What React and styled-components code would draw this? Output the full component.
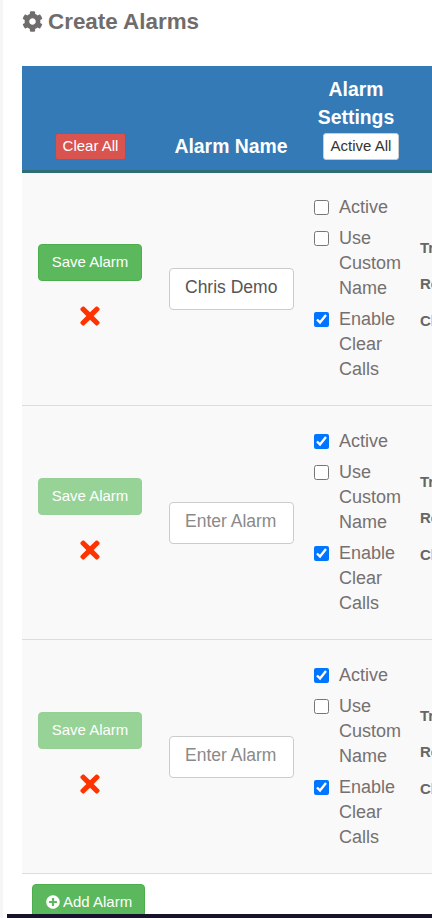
import React from 'react';
import styled, { createGlobalStyle } from 'styled-components';
import { FaCog, FaPlusCircle, FaTimes } from 'react-icons/fa';

const GlobalStyle = createGlobalStyle`
  html, body {
    margin: 0;
    padding: 0;
    height: 100%;
    overflow: hidden;
    background: #fff;
    font-family: "Liberation Sans", Arial, sans-serif;
  }
`;

const Page = styled.div`
  position: relative;
  width: 432px;
  height: 918px;
  overflow: hidden;
  box-sizing: border-box;
  background: #fff;
  border-left: 3px solid #f5f5f5;
  padding-left: 19px;
`;

const Title = styled.h3`
  display: flex;
  align-items: center;
  gap: 5px;
  margin: 0;
  height: 66px;
  padding-bottom: 23px;
  box-sizing: border-box;
  font-size: 22.4px;
  font-weight: bold;
  color: #706c6c;
  svg { font-size: 21px; }
`;

const Table = styled.div`
  width: 520px;
`;

const HeadRow = styled.div`
  position: relative;
  z-index: 1;
  display: grid;
  grid-template-columns: 137px 144px 106px;
  align-items: end;
  height: 104px;
  margin-bottom: -1px;
  background: #337ab7;
  border-bottom: 3px solid #2e6d73;
`;

const HeadCell = styled.div`
  display: flex;
  flex-direction: column;
  align-items: center;
  padding-bottom: 10px;
  color: #fff;
  font-size: 19.4px;
  font-weight: bold;
  line-height: 28px;
`;

const SettingsHead = styled(HeadCell)`
  text-align: center;
`;

const ClearButton = styled.button`
  width: 71px;
  height: 27px;
  padding: 0 0 2px;
  border: 1px solid #d43f3a;
  border-radius: 3px;
  background: #d9534f;
  color: #fff;
  font: 15px "Liberation Sans", Arial, sans-serif;
`;

const ActiveButton = styled.button`
  width: 76px;
  height: 27px;
  padding: 0 0 2px;
  margin: 2px 0 0 10px;
  border: 1px solid #ccc;
  border-radius: 3px;
  background: #fff;
  color: #333;
  font: 15px "Liberation Sans", Arial, sans-serif;
`;

const Row = styled.div`
  display: grid;
  grid-template-columns: 136px 156px 106px 1fr;
  align-items: center;
  height: 233px;
  background: #f9f9f9;
  border-bottom: 1px solid #ddd;
`;

const ActionCell = styled.div`
  display: flex;
  flex-direction: column;
  align-items: center;
  margin-top: -3px;
`;

const SaveButton = styled.button`
  width: 104px;
  height: 37px;
  padding: 0 0 2px;
  border: 1px solid ${p => (p.$disabled ? '#96d096' : '#4cae4c')};
  border-radius: 4px;
  background: ${p => (p.$disabled ? '#97d297' : '#5cb85c')};
  color: #fff;
  font: 15px "Liberation Sans", Arial, sans-serif;
`;

const RemoveIcon = styled(FaTimes)`
  margin-top: 21px;
  font-size: 28px;
  color: #ff3300;
`;

const NameInput = styled.input`
  width: 125px;
  height: 42px;
  box-sizing: border-box;
  padding: 5px 15px 7px;
  margin: 0 0 0 11px;
  border: 1px solid #ccc;
  border-radius: 4px;
  background: #fff;
  color: #555;
  font: 17.5px "Liberation Sans", Arial, sans-serif;
  &::placeholder { color: #8a8a8a; opacity: 1; }
`;

const Settings = styled.div`
  display: flex;
  flex-direction: column;
  gap: 6px;
`;

const CheckRow = styled.label`
  display: grid;
  grid-template-columns: 25px 1fr;
  color: #767070;
  font-size: 18px;
  line-height: 25px;
`;

const Check = styled.input`
  width: 15px;
  height: 15px;
  margin: 5px 0 0 0;
  accent-color: #0075ff;
`;

const Meta = styled.div`
  display: flex;
  flex-direction: column;
  gap: 16.5px;
  color: #666;
  font-size: 15px;
  font-weight: bold;
  line-height: 20px;
  margin-top: -9px;
`;

const AddButton = styled.button`
  display: flex;
  align-items: center;
  gap: 3px;
  width: 113px;
  height: 37px;
  margin: 10px 0 0 10px;
  padding: 0 0 2px 13px;
  border: 1px solid #4cae4c;
  border-radius: 4px;
  background: #5cb85c;
  color: #fff;
  font: 15px "Liberation Sans", Arial, sans-serif;
  svg { font-size: 14px; }
`;

const BottomStrip = styled.div`
  position: absolute;
  left: 4px;
  right: 0;
  bottom: 0;
  height: 4px;
  background: #16132a;
`;

const rows = [
  { id: 1, name: 'Chris Demo', active: false, saved: true },
  { id: 2, name: '', active: true, saved: false },
  { id: 3, name: '', active: true, saved: false },
];

const App = () => (
  <Page>
    <GlobalStyle />
    <Title><FaCog />Create Alarms</Title>
    <Table>
      <HeadRow>
        <HeadCell><ClearButton>Clear All</ClearButton></HeadCell>
        <HeadCell>Alarm Name</HeadCell>
        <SettingsHead>
          Alarm Settings
          <ActiveButton>Active All</ActiveButton>
        </SettingsHead>
      </HeadRow>
      {rows.map(row => (
        <Row key={row.id}>
          <ActionCell>
            <SaveButton $disabled={!row.saved}>Save Alarm</SaveButton>
            <RemoveIcon />
          </ActionCell>
          <NameInput defaultValue={row.name} placeholder="Enter Alarm" />
          <Settings>
            <CheckRow><Check type="checkbox" defaultChecked={row.active} />Active</CheckRow>
            <CheckRow><Check type="checkbox" />Use Custom Name</CheckRow>
            <CheckRow><Check type="checkbox" defaultChecked />Enable Clear Calls</CheckRow>
          </Settings>
          <Meta>
            <span>Trigger</span>
            <span>Repeat</span>
            <span>Clear</span>
          </Meta>
        </Row>
      ))}
      <AddButton><FaPlusCircle />Add Alarm</AddButton>
    </Table>
    <BottomStrip />
  </Page>
);

export default App;
